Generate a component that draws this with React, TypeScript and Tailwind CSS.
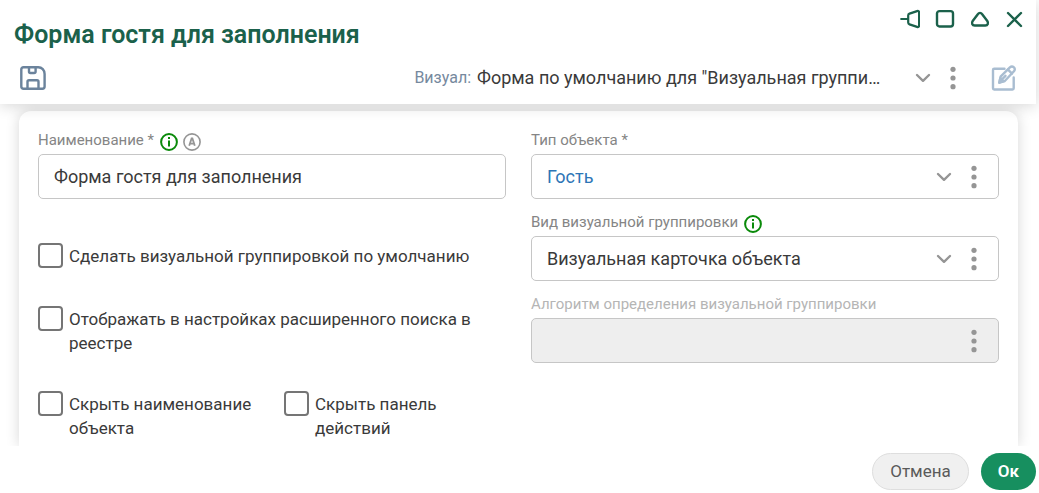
import { useId, useState, type ReactNode } from 'react'

const Chevron = () => (
	<svg className="w-4 h-4 shrink-0 pointer-events-none" viewBox="0 0 16 16" fill="none" stroke="#959595" strokeWidth="2.4" strokeLinecap="round" strokeLinejoin="round">
		<path d="M2 5l6 5.8 6-5.8" />
	</svg>
)

const DotsButton = ({ label }: { label: string }) => (
	<button type="button" aria-label={label} className="w-4 h-6 shrink-0 flex items-center justify-center">
		<svg className="w-1.5 h-6" viewBox="0 0 6 24" fill="#959595">
			<circle cx="3" cy="3.3" r="2.6" />
			<circle cx="3" cy="12" r="2.6" />
			<circle cx="3" cy="20.7" r="2.6" />
		</svg>
	</button>
)

const InfoIcon = () => (
	<svg className="w-[18px] h-[18px]" viewBox="0 0 18 18" fill="none" stroke="#0a8a0a" strokeWidth="2">
		<circle cx="9" cy="9" r="7.9" />
		<path d="M9 7.4v6.2M9 4v2" />
	</svg>
)

const AutoIcon = () => (
	<svg className="w-[18px] h-[18px]" viewBox="0 0 18 18" fill="none" stroke="#959595" strokeWidth="1.6">
		<circle cx="9" cy="9" r="8.1" />
		<path d="M6.2 12.8L8.6 5.4h.8l2.4 7.4M7 10.6h4" strokeWidth="1.8" />
	</svg>
)

type FieldProps = {
	id: string
	label: string
	required?: boolean
	disabled?: boolean
	hints?: ReactNode
	children: ReactNode
}

const Field = ({ id, label, required, disabled, hints, children }: FieldProps) => (
	<div>
		<div className="flex h-[18px] mb-[5px] gap-1.5">
			<label htmlFor={id} className={`text-[15px] leading-[18px] ${disabled ? 'text-[#b5b5b5]' : 'text-[#858585]'}`}>
				{label}
				{required && ' *'}
			</label>
			<div className="flex gap-[5px] pt-0.5">{hints}</div>
		</div>
		<div className={`flex items-center h-[45px] border border-[#c6c6c6] rounded-[5px] pl-[15px] pr-4 ${disabled ? 'bg-[#eeeeee]' : 'bg-white'}`}>
			{children}
		</div>
	</div>
)

type SelectFieldProps = {
	label: string
	value?: string
	required?: boolean
	disabled?: boolean
	hints?: ReactNode
	color?: string
}

const SelectField = ({ label, value, required, disabled, hints, color = 'text-[#3a3a3a]' }: SelectFieldProps) => {
	const id = useId()

	return (
		<Field id={id} label={label} required={required} disabled={disabled} hints={hints}>
			<select id={id} disabled={disabled} className={`appearance-none outline-none bg-transparent flex-1 min-w-0 h-full text-lg ${color}`}>
				{value && <option>{value}</option>}
			</select>
			{!disabled && <Chevron />}
			<div className="ml-3.5 flex">
				<DotsButton label="Действия" />
			</div>
		</Field>
	)
}

const Check = ({ label }: { label: string }) => (
	<label className="flex items-start gap-1.5 min-h-[27px]">
		<input type="checkbox" className="appearance-none shrink-0 w-[25px] h-[25px] border-2 border-[#757575] rounded-[4px] bg-white checked:bg-[#178f5f]" />
		<span className="pt-px text-[17px] leading-6">{label}</span>
	</label>
)

const WindowControls = () => (
	<div className="flex items-start gap-[15px] text-[#1b614b]">
		<button type="button" aria-label="Закрепить">
			<svg className="w-5 h-5" viewBox="0 0 20 20" fill="none" stroke="currentColor" strokeWidth="2.2" strokeLinecap="round" strokeLinejoin="round">
				<path d="M1.2 10h7M8.2 6.5c0-1 .4-1.6 1.3-1.900l7.6-2.500c1.200-.4 2 .1 2 1.300v13.200c0 1.200-.8 1.700-2 1.300l-7.600-2.500c-.9-.3-1.300-.9-1.300-1.900z" />
			</svg>
		</button>
		<button type="button" aria-label="Развернуть">
			<svg className="w-5 h-5" viewBox="0 0 20 20" fill="none" stroke="currentColor" strokeWidth="2.4">
				<rect x="2" y="2.1" width="16" height="15.4" rx="2.5" />
			</svg>
		</button>
		<button type="button" aria-label="Свернуть">
			<svg className="w-5 h-5" viewBox="0 0 20 20" fill="none" stroke="currentColor" strokeWidth="2.4" strokeLinejoin="round">
				<path d="M8 5c1-1.5 3-1.5 4 0l5.3 7c1.4 2 .6 4.5-2 4.5H4.700c-2.600 0-3.400-2.500-2-4.500z" />
			</svg>
		</button>
		<button type="button" aria-label="Закрыть">
			<svg className="w-5 h-5" viewBox="0 0 20 20" fill="none" stroke="currentColor" strokeWidth="2.4" strokeLinecap="round">
				<path d="M3 4l13 13M16 4l-13 13" />
			</svg>
		</button>
	</div>
)

const SaveIcon = () => (
	<svg className="w-[26px] h-6" viewBox="0 0 26 24" fill="none" stroke="#6b839c" strokeWidth="2.4" strokeLinejoin="round">
		<path d="M3.500 1.200h14.800c3.500 0 6.300 3 6.300 6.800v12.500c0 1.400-.8 2.200-2.200 2.200H3.500c-1.400 0-2.200-.8-2.200-2.200V3.400c0-1.400.8-2.200 2.200-2.200z" />
		<path d="M9 1.200v4.300c0 1 .4 1.500 1.400 1.500h3.700c1 0 1.500-.5 1.500-1.500V1.200M7.500 22.700v-7c0-1 .5-1.500 1.500-1.500h8c1 0 1.500.5 1.500 1.500v7" />
	</svg>
)

const EditIcon = () => (
	<svg className="w-[26px] h-[26px]" viewBox="0 0 26 26" fill="none" stroke="#a9bdd1" strokeWidth="2.4" strokeLinejoin="round" strokeLinecap="round">
		<path d="M13.5 3.8H3.2c-.8 0-1.2.4-1.2 1.2v18.3c0 .8.4 1.2 1.2 1.2h18.3c.8 0 1.2-.4 1.2-1.2V12.5" />
		<path d="M8.3 17.7l1.3-6 9.300-9.300c1.200-1.200 2.800-1.200 4-.1 1.200 1.200 1.200 2.800 0 4L13.800 16z" fill="#ffffff" />
		<path d="M17 4.600l4 4M11.500 13.800l3-3" />
		<path d="M8.300 17.700l1-4.500 3.200 3z" fill="#a9bdd1" />
	</svg>
)

export default function App() {
	const [name, setName] = useState('Форма гостя для заполнения')

	return (
		<div className="font-[Roboto,sans-serif] text-[#3a3a3a] bg-white pr-[3px] overflow-hidden">
			<header className="relative z-10 bg-white h-[104px] pt-[9px] shadow-[0_2px_14px_rgba(0,0,0,0.16)]">
				<div className="flex justify-between pl-3.5 pr-[11px]">
					<h1 className="pt-2.5 text-[25px] leading-8 font-semibold text-[#1b614b]">Форма гостя для заполнения</h1>
					<WindowControls />
				</div>
				<div className="flex items-center justify-between h-[54px] pl-5 pr-[19px]">
					<button type="button" aria-label="Сохранить">
						<SaveIcon />
					</button>
					<div className="flex items-center">
						<label htmlFor="visual" className="text-base text-[#76899e] mr-1.5">
							Визуал:
						</label>
						<select id="visual" className="appearance-none outline-none bg-transparent w-[420px] text-lg">
							<option>Форма по умолчанию для "Визуальная группи…</option>
						</select>
						<div className="flex items-center gap-3.5 ml-[18px]">
							<Chevron />
							<DotsButton label="Действия с визуалом" />
						</div>
						<button type="button" aria-label="Редактировать" className="ml-[30px]">
							<EditIcon />
						</button>
					</div>
				</div>
			</header>

			<main className="overflow-hidden pt-[7px] pl-[19px] pr-[18px]">
				<div className="grid grid-cols-2 gap-x-[25px] bg-white rounded-t-xl pt-5 px-[19px] pb-1.5 shadow-[0_0_14px_rgba(0,0,0,0.16)]">
					<div>
						<Field
							id="name"
							label="Наименование"
							required
							hints={
								<>
									<InfoIcon />
									<AutoIcon />
								</>
							}
						>
							<input id="name" type="text" value={name} onChange={(e) => setName(e.target.value)} className="w-full h-full text-lg outline-none bg-transparent" />
						</Field>
						<div className="flex flex-col gap-9 mt-11">
							<Check label="Сделать визуальной группировкой по умолчанию" />
							<Check label="Отображать в настройках расширенного поиска в реестре" />
							<div className="grid grid-cols-2 gap-6">
								<Check label="Скрыть наименование объекта" />
								<Check label="Скрыть панель действий" />
							</div>
						</div>
					</div>

					<div className="flex flex-col gap-3.5">
						<SelectField label="Тип объекта" value="Гость" required color="text-[#2d75b6]" />
						<SelectField label="Вид визуальной группировки" value="Визуальная карточка объекта" hints={<InfoIcon />} />
						<SelectField label="Алгоритм определения визуальной группировки" disabled />
					</div>
				</div>
			</main>

			<footer className="relative bg-white flex justify-end gap-3 pt-[7px] pb-[3px]">
				<button type="button" className="h-[37px] px-[17px] rounded-full border border-[#dedede] bg-[#f0f0f0] text-[17px] text-[#5a5a5a]">
					Отмена
				</button>
				<button type="button" className="h-[37px] px-[17px] rounded-full bg-[#178f5f] text-[17px] font-semibold text-white">
					Ок
				</button>
			</footer>
		</div>
	)
}
